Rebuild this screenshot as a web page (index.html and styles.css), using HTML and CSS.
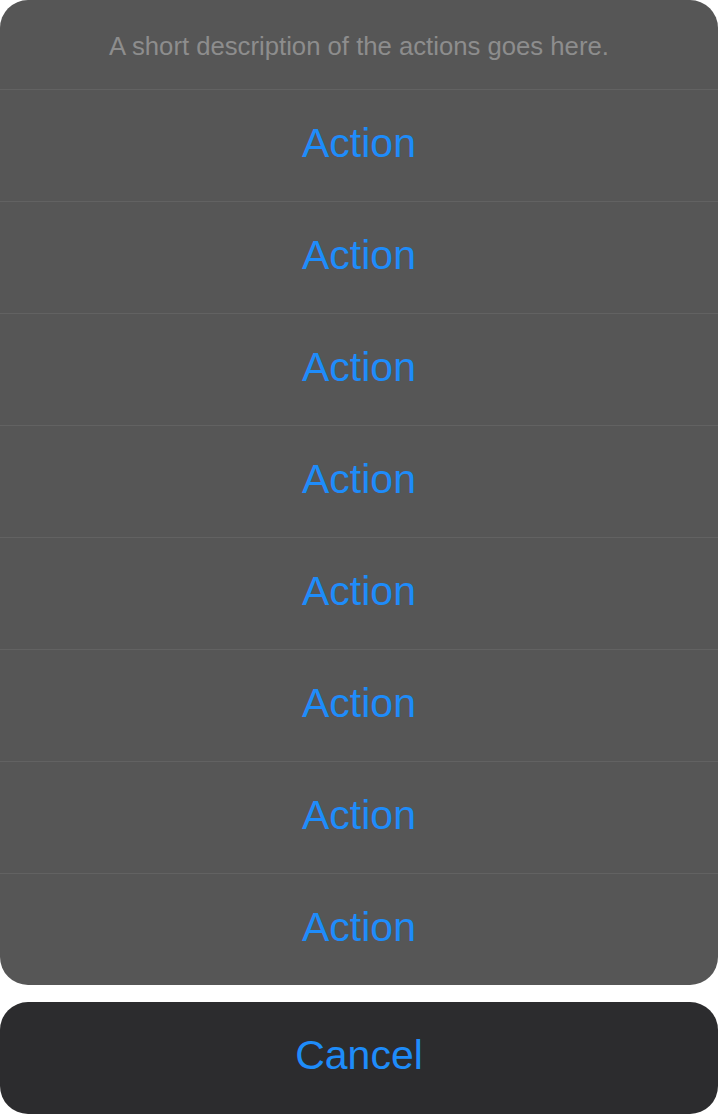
FILE: index.html
```html
<!doctype html>
<html lang="en">
<head>
	<meta charset="UTF-8">
	<title>Action Sheet</title>
	<link rel="stylesheet" href="styles.css">
</head>
<body>
	<div class="sheet">
		<div class="group">
			<div class="desc">A short description of the actions goes here.</div>
			<div class="item">Action</div>
			<div class="item">Action</div>
			<div class="item">Action</div>
			<div class="item">Action</div>
			<div class="item">Action</div>
			<div class="item">Action</div>
			<div class="item">Action</div>
			<div class="item">Action</div>
		</div>
		<div class="cancel">Cancel</div>
	</div>
</body>
</html>
```
FILE: styles.css
```css
*{margin:0px;padding:0px;box-sizing:border-box;}
body{background:#fff;font-family:"Liberation Sans",Arial,sans-serif;}
.sheet{
	width:718px;
	display:flex;
	flex-direction:column;
	gap:17px;
}
.group{
	background:#565656;
	border-radius:28px;
	overflow:hidden;
}
.desc{
	height:89px;
	display:flex;
	align-items:center;
	justify-content:center;
	color:#8d8d8d;
	font-size:25.7px;
	padding-top:3px;
}
.item,.cancel{
	height:112px;
	display:flex;
	align-items:center;
	justify-content:center;
	color:#1e8cfa;
	font-size:41px;
	padding-bottom:4px;
	cursor:pointer;
}
.item{border-top:1px solid #626262;}
.cancel{
	background:#2c2c2e;
	border-radius:28px;
	padding-bottom:6px;
}
```
